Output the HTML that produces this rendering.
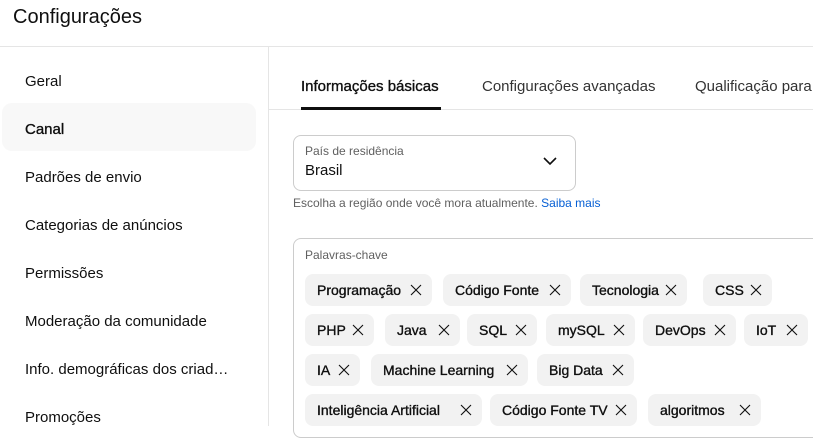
<!DOCTYPE html>
<html><head><meta charset="utf-8"><style>
*{box-sizing:border-box;margin:0;padding:0}
body{width:813px;height:426px;overflow:hidden;background:#fff;font-family:"Liberation Sans",Arial,sans-serif;color:#0f0f0f;position:relative}
.a{position:absolute;white-space:nowrap}
.nav{font-size:15px;left:25px}
.m{-webkit-text-stroke:0.35px #0f0f0f}
.chip{position:absolute;height:32px;background:#f2f2f2;border-radius:8px;font-size:14px;color:#0f0f0f;line-height:32px;padding-left:12px;-webkit-text-stroke:0.35px #0f0f0f}
.chip svg{position:absolute;right:10px;top:10px}
</style></head><body>
<div class="a" style="left:13px;top:6px;font-size:20px">Configurações</div>
<div class="a" style="left:0;top:46px;width:813px;height:1px;background:#e5e5e5"></div>
<div class="a" style="left:268px;top:47px;width:1px;height:379px;background:#e5e5e5"></div>
<div class="a" style="left:2px;top:103px;width:254px;height:48px;background:#f8f8f8;border-radius:10px"></div>
<div class="a nav" style="top:73px">Geral</div>
<div class="a nav m" style="top:121px">Canal</div>
<div class="a nav" style="top:169px">Padrões de envio</div>
<div class="a nav" style="top:217px">Categorias de anúncios</div>
<div class="a nav" style="top:265px">Permissões</div>
<div class="a nav" style="top:313px">Moderação da comunidade</div>
<div class="a nav" style="top:361px">Info. demográficas dos criad…</div>
<div class="a nav" style="top:409px">Promoções</div>
<div class="a" style="left:269px;top:109px;width:544px;height:1px;background:#e5e5e5"></div>
<div class="a m" style="left:301px;top:78px;font-size:15px">Informações básicas</div>
<div class="a" style="left:301px;top:107px;width:140px;height:3px;background:#0f0f0f"></div>
<div class="a" style="left:482px;top:78px;font-size:15px;color:#333">Configurações avançadas</div>
<div class="a" style="left:695px;top:78px;font-size:15px;color:#333">Qualificação para</div>
<div class="a" style="left:293px;top:135px;width:283px;height:56px;border:1px solid #ccc;border-radius:8px"></div>
<div class="a" style="left:305px;top:144px;font-size:12px;color:#606060">País de residência</div>
<div class="a" style="left:305px;top:162px;font-size:15px">Brasil</div>
<svg class="a" style="left:542px;top:156px" width="16" height="10"><path d="M2 2l6 6 6-6" fill="none" stroke="#0f0f0f" stroke-width="1.6"/></svg>
<div class="a" style="left:293px;top:196px;font-size:12px;color:#606060">Escolha a região onde você mora atualmente. <span style="color:#065fd4">Saiba mais</span></div>
<div class="a" style="left:293px;top:238px;width:540px;height:200px;border:1px solid #ccc;border-radius:8px"></div>
<div class="a" style="left:305px;top:248px;font-size:12px;color:#606060">Palavras-chave</div>
<div id="c"></div>
<script>
var r=[[274,[[305,127,"Programação"],[443,128,"Código Fonte"],[580,107,"Tecnologia"],[703,69,"CSS"]]],
[314,[[305,69,"PHP"],[385,75,"Java"],[467,70,"SQL"],[546,89,"mySQL"],[643,93,"DevOps"],[744,64,"IoT"]]],
[354,[[305,55,"IA"],[371,157,"Machine Learning"],[537,97,"Big Data"]]],
[394,[[305,177,"Inteligência Artificial"],[490,147,"Código Fonte TV"],[648,113,"algoritmos"]]]];
var h="";r.forEach(function(row){row[1].forEach(function(c){h+='<div class="chip" style="left:'+c[0]+'px;top:'+row[0]+'px;width:'+c[1]+'px">'+c[2]+'<svg width="12" height="12"><path d="M1 1l10 10M11 1L1 11" stroke="#0f0f0f" stroke-width="1.1"/></svg></div>'})});
document.getElementById("c").innerHTML=h;
</script>
</body></html>
